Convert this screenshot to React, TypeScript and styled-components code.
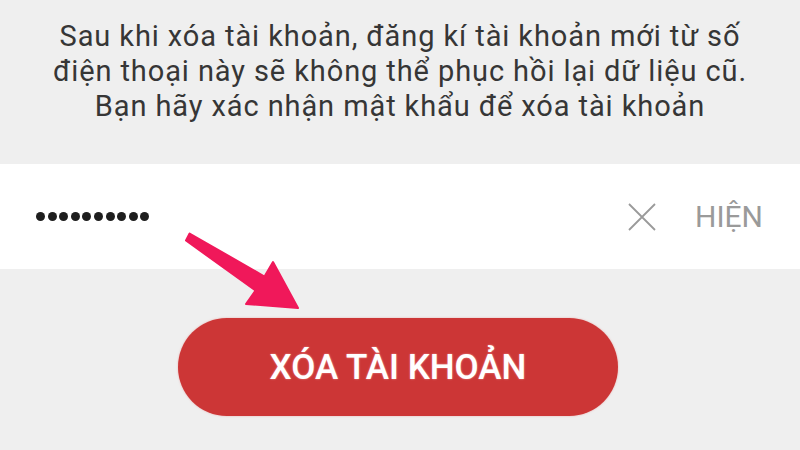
import styled, { createGlobalStyle } from "styled-components";

const GlobalStyle = createGlobalStyle`
  html, body {
    margin: 0;
    padding: 0;
    background: #efefef;
  }
  * {
    box-sizing: border-box;
  }
`;

const StyledPage = styled.div`
  position: relative;
  width: 800px;
  height: 450px;
  overflow: hidden;
  background-color: #efefef;
  font-family: Roboto, "Noto Sans", sans-serif;
`;

const StyledMessage = styled.p`
  margin: 0;
  padding: 19px 20px 40px;
  text-align: center;
  font-size: 29px;
  line-height: 35px;
  letter-spacing: 0.9px;
  font-weight: 400;
  color: #363636;
`;

const StyledField = styled.div`
  display: flex;
  align-items: center;
  height: 105px;
  padding: 0 37px 0 36px;
  background-color: #ffffff;
`;

const StyledDots = styled.div`
  display: flex;
  gap: 2.6px;
  flex: 1;
`;

const StyledDot = styled.span`
  width: 9px;
  height: 9px;
  border-radius: 50%;
  background-color: #1e1e1e;
`;

const StyledClear = styled.button`
  display: flex;
  align-items: center;
  justify-content: center;
  width: 28px;
  height: 28px;
  padding: 0;
  margin-right: 39px;
  border: none;
  background: none;
  color: #9a9a9a;
`;

const StyledToggle = styled.span`
  font-size: 30px;
  font-weight: 400;
  color: #9a9a9a;
`;

const StyledActions = styled.div`
  display: flex;
  justify-content: center;
  padding-top: 49px;
`;

const StyledDeleteButton = styled.button`
  width: 440px;
  height: 98px;
  margin-right: 4px;
  border: none;
  border-radius: 49px;
  background-color: #cc3636;
  box-shadow: 0 0 2px rgba(230, 120, 120, 0.6);
  font-family: Roboto, "Noto Sans", sans-serif;
  font-size: 35px;
  font-weight: 500;
  color: #ffffff;
  text-shadow: 0 0 2px rgba(255, 200, 200, 0.7);
`;

const StyledArrow = styled.svg`
  position: absolute;
  left: 0;
  top: 0;
  pointer-events: none;
`;

const dots = Array.from({ length: 10 }, (_, i) => i);

export default function App() {
  return (
    <>
      <GlobalStyle />
      <StyledPage>
        <StyledMessage>
          Sau khi xóa tài khoản, đăng kí tài khoản mới từ số
          <br />
          điện thoại này sẽ không thể phục hồi lại dữ liệu cũ.
          <br />
          Bạn hãy xác nhận mật khẩu để xóa tài khoản
        </StyledMessage>
        <StyledField>
          <StyledDots>
            {dots.map((i) => (
              <StyledDot key={i} />
            ))}
          </StyledDots>
          <StyledClear aria-label="Xóa">
            <svg width="28" height="28" viewBox="0 0 28 28">
              <path d="M1 1 L27 27 M27 1 L1 27" stroke="currentColor" strokeWidth="1.8" fill="none" />
            </svg>
          </StyledClear>
          <StyledToggle>HIỆN</StyledToggle>
        </StyledField>
        <StyledActions>
          <StyledDeleteButton>XÓA TÀI KHOẢN</StyledDeleteButton>
        </StyledActions>
        <StyledArrow width="800" height="450" viewBox="0 0 800 450">
          <polygon
            points="189.6,233.5 264.5,276.5 273,262 298,308 246,304 255.5,290.5 186,240.5"
            fill="#f0185a"
            strokeLinejoin="round"
            stroke="#f0185a"
            strokeWidth="2"
          />
        </StyledArrow>
      </StyledPage>
    </>
  );
}
